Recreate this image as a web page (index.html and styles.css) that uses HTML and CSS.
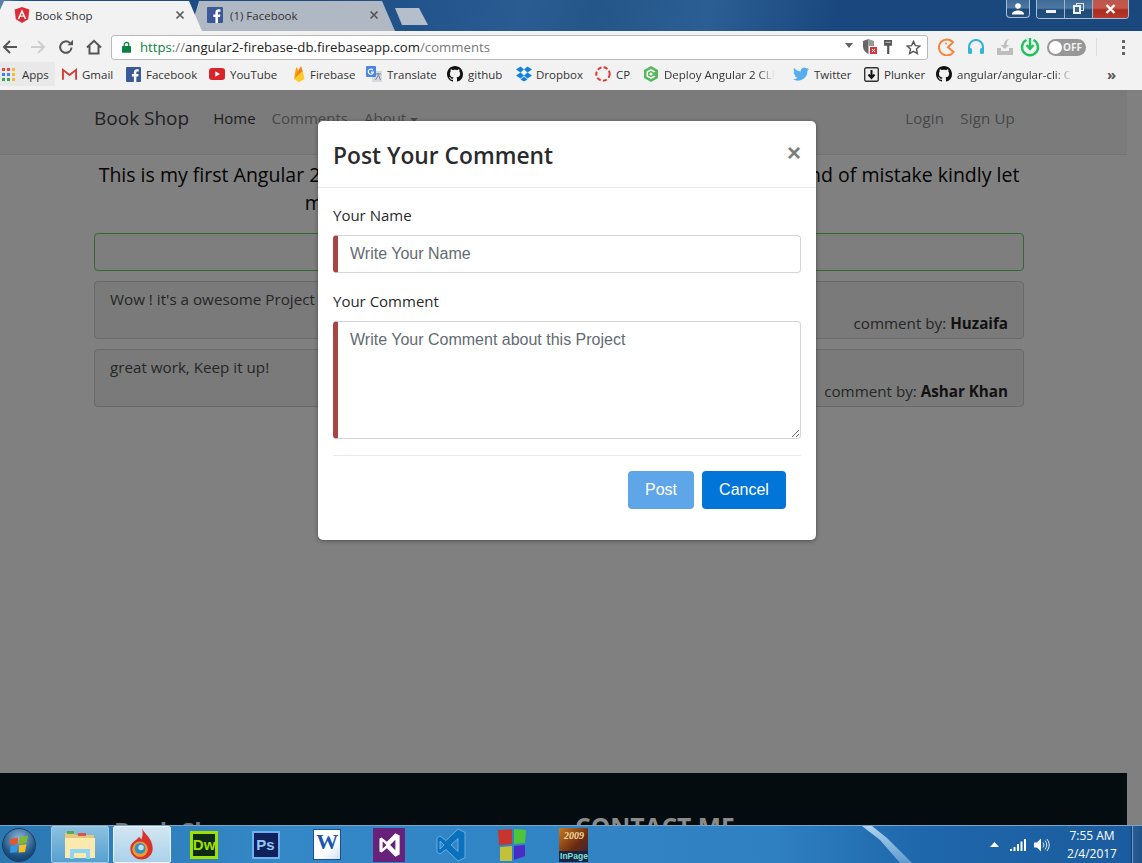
FILE: index.html
```html
<!DOCTYPE html>
<html lang="en">
<head>
<meta charset="utf-8">
<title>Book Shop</title>
<link rel="stylesheet" href="styles.css">
</head>
<body>
<svg class="defs" width="0" height="0" aria-hidden="true">
  <symbol id="gh" viewBox="0 0 16 16"><path d="M8 0C3.58 0 0 3.58 0 8c0 3.54 2.29 6.53 5.47 7.59.4.07.55-.17.55-.38 0-.19-.01-.82-.01-1.49-2.01.37-2.53-.49-2.69-.94-.09-.23-.48-.94-.82-1.13-.28-.15-.68-.52-.01-.53.63-.01 1.08.58 1.23.82.72 1.21 1.87.87 2.33.66.07-.52.28-.87.51-1.07-1.78-.2-3.64-.89-3.64-3.95 0-.87.31-1.59.82-2.15-.08-.2-.36-1.02.08-2.12 0 0 .67-.21 2.2.82.64-.18 1.32-.27 2-.27.68 0 1.36.09 2 .27 1.53-1.04 2.2-.82 2.2-.82.44 1.1.16 1.92.08 2.12.51.56.82 1.27.82 2.15 0 3.07-1.87 3.75-3.65 3.95.29.25.54.73.54 1.48 0 1.07-.01 1.93-.01 2.2 0 .21.15.46.55.38A8.013 8.013 0 0 0 16 8c0-4.42-3.58-8-8-8z"/></symbol>
  <symbol id="fb" viewBox="0 0 16 16"><rect width="16" height="16" rx="1" fill="#3b5998"/><path d="M11 16V10h2l.4-2.6H11V6c0-.8.3-1.2 1.2-1.2h1.3V2.4C13.2 2.3 12.400 2.300 11.600 2.300 9.700 2.300 8.400 3.400 8.400 5.600v1.800H6.300V10h2.100v6z" fill="#fff"/></symbol>
</svg>

<header class="titlebar">
  <div class="tabs">
    <div class="tab tab-active">
      <svg class="ico16" viewBox="0 0 16 16"><path d="M8 0 .7 2.600 1.800 12.300 8 16l6.200-3.700 1.100-9.700z" fill="#dd2c36"/><path d="M8 2.200 3.600 12h1.700l.9-2.200h3.600l.9 2.200h1.700zM8 6l1.300 2.600H6.700z" fill="#fff"/></svg>
      <span class="tab-title">Book Shop</span>
      <svg class="tab-x" viewBox="0 0 10 10"><path d="M1.500 1.500l7 7m0-7l-7 7" stroke="#5a5a5a" stroke-width="1.700"/></svg>
    </div>
    <div class="tab tab-other">
      <svg class="ico16"><use href="#fb"/></svg>
      <span class="tab-title">(1) Facebook</span>
      <svg class="tab-x" viewBox="0 0 10 10"><path d="M1.500 1.500l7 7m0-7l-7 7" stroke="#555" stroke-width="1.700"/></svg>
    </div>
    <div class="tab-new"></div>
  </div>
  <div class="winbtns">
    <div class="winbtn win-user">
      <svg viewBox="0 0 14 12" width="14" height="12"><circle cx="7" cy="3" r="2.800" fill="#fff"/><path d="M1 11.500c0-3 3-4 6-4s6 1 6 4z" fill="#fff"/></svg>
    </div>
    <div class="wingroup">
      <div class="winbtn win-min"><span class="min-bar"></span></div>
      <div class="winbtn win-max"><span class="max-back"></span><span class="max-front"></span></div>
      <div class="winbtn win-close">
        <svg viewBox="0 0 12 10" width="13" height="10"><path d="M2 1l8 8m0-8l-8 8" stroke="#fff" stroke-width="2.400"/></svg>
      </div>
    </div>
  </div>
</header>

<nav class="toolbar">
  <svg class="tool tool-back" viewBox="0 0 16 16"><path d="M15 8H2.500M8 2 2 8l6 6" fill="none" stroke="#555" stroke-width="2"/></svg>
  <svg class="tool tool-fwd" viewBox="0 0 16 16"><path d="M1 8h12.500M8 2l6 6-6 6" fill="none" stroke="#cfcfcf" stroke-width="2"/></svg>
  <svg class="tool tool-reload" viewBox="0 0 16 16"><path d="M13.500 8.500A5.700 5.700 0 1 1 11.800 4" fill="none" stroke="#555" stroke-width="2"/><path d="M9.500 6.300H15V.8z" fill="#555"/></svg>
  <svg class="tool tool-home" viewBox="0 0 16 16"><path d="M1 8.500 8 1.800l7 6.700M3.500 7v7.500h9V7" fill="none" stroke="#555" stroke-width="2"/></svg>
  <div class="omnibox">
    <svg class="lock" viewBox="0 0 10 13"><path d="M2.500 6V3.800a2.500 2.500 0 0 1 5 0V6" fill="none" stroke="#0b8043" stroke-width="1.400"/><rect y="5.500" width="10" height="7.500" rx=".8" fill="#0b8043"/></svg>
    <div class="url"><span class="u-https">https</span><span class="u-dim">://</span><span>angular2-firebase-db.firebaseapp.com</span><span class="u-dim">/comments</span></div>
    <svg class="omni-ico omni-tri" viewBox="0 0 8 5"><path d="M0 0h8L4 5z" fill="#666"/></svg>
    <svg class="omni-ico omni-shield" viewBox="0 0 14 16"><path d="M5.500 0 0 2v5c0 4 2.500 6.500 5.500 8z" fill="#666"/><path d="M5.500 0 11 2v5H5.500z" fill="#999"/><rect x="7" y="8" width="7" height="7" fill="#d9363e"/><path d="M9 10l3 3m0-3l-3 3" stroke="#fff"/></svg>
    <svg class="omni-ico omni-key" viewBox="0 0 9 16"><path d="M0 0h9v6.500H6V16H3.500V6.500H0z" fill="#555"/><rect x="1.500" y="2" width="6" height="1.300" fill="#bbb"/></svg>
    <svg class="omni-ico omni-star" viewBox="0 0 16 16"><path d="M8 1.500l2 4.500 4.800.5-3.600 3.200 1 4.800L8 12.100l-4.200 2.400 1-4.800L1.200 6.500 6 6z" fill="none" stroke="#555" stroke-width="1.500"/></svg>
  </div>
  <div class="exts">
    <svg class="ext ext-pac" viewBox="0 0 18 18"><path d="M15 4.200A8 8 0 1 0 15.500 14L10 9.300z" fill="none" stroke="#f5843a" stroke-width="2"/><circle cx="8" cy="5.500" r="1" fill="#f5843a"/></svg>
    <svg class="ext ext-head" viewBox="0 0 18 18"><path d="M2 12V9a7 7 0 0 1 14 0v3" fill="none" stroke="#31b4d8" stroke-width="2"/><rect x="1" y="10" width="4" height="6" rx="1.500" fill="#31b4d8"/><rect x="13" y="10" width="4" height="6" rx="1.500" fill="#31b4d8"/></svg>
    <svg class="ext ext-dl" viewBox="0 0 18 18"><path d="M1 10v7h16v-7h-4v3H5v-3z" fill="#bdbdbd"/><path d="M9 11 4.500 7H8C8 4 10 1.500 13 1 11 3 10.500 5 10.500 7H13z" fill="#bdbdbd"/></svg>
    <svg class="ext ext-pow" viewBox="0 0 20 20"><path d="M6.500 3A8 8 0 1 0 13.500 3" fill="none" stroke="#21c25e" stroke-width="2.400"/><path d="M10 1v10M6.500 8 10 12l3.500-4" fill="none" stroke="#21c25e" stroke-width="2.400"/></svg>
    <div class="toggle"><span class="knob"></span><span class="toggle-t">OFF</span></div>
    <span class="tool-sep"></span>
    <div class="menu-dots"><i></i><i></i><i></i></div>
  </div>
</nav>

<div class="bookmarks">
  <a class="bm bm-apps">
    <svg class="ico13" viewBox="0 0 13 13"><rect width="3" height="3" fill="#e8453c"/><rect x="5" width="3" height="3" fill="#e8453c"/><rect x="10" width="3" height="3" fill="#f9bb2d"/><rect y="5" width="3" height="3" fill="#3a7fec"/><rect x="5" y="5" width="3" height="3" fill="#4285f4"/><rect x="10" y="5" width="3" height="3" fill="#f9bb2d"/><rect y="10" width="3" height="3" fill="#34a853"/><rect x="5" y="10" width="3" height="3" fill="#34a853"/><rect x="10" y="10" width="3" height="3" fill="#f9bb2d"/></svg>
    <span>Apps</span>
  </a>
  <a class="bm bm-gmail"><svg class="ico15" viewBox="0 0 16 13"><path d="M1 12V1.500L8 7l7-5.500V12" fill="none" stroke="#d33d33" stroke-width="2"/><path d="M3 12V5.500L8 9l5-3.500V12" fill="#eee"/></svg><span>Gmail</span></a>
  <a class="bm bm-fb"><svg class="ico15"><use href="#fb"/></svg><span>Facebook</span></a>
  <a class="bm bm-yt"><svg class="ico16" viewBox="0 0 16 12"><rect width="16" height="12" rx="3" fill="#d9252a"/><path d="M6.300 3.300 11 6 6.300 8.700z" fill="#fff"/></svg><span>YouTube</span></a>
  <a class="bm bm-fire"><svg class="ico16" viewBox="0 0 16 16"><path d="M3 13 5 2c.1-.5.6-.6.9-.2L8 5.600z" fill="#ffa000"/><path d="M3 13 9.500 .8c.2-.4.6-.4.8 0L12 6z" fill="#f57f17"/><path d="M3 13 11 5.500c.3-.3.7-.1.8.3L13.500 13 8.700 15.700a1.500 1.500 0 0 1-1.400 0z" fill="#ffca28"/></svg><span>Firebase</span></a>
  <a class="bm bm-tr"><svg class="ico16" viewBox="0 0 16 16"><rect x="6" y="5" width="10" height="11" fill="#d6d9de"/><path d="M9 8h6M12 7v2m-2.500 5 3-5 2 5" stroke="#7a8594" fill="none"/><rect width="10" height="11" rx="1" fill="#4a86e8"/><path d="M7 4.200A2.600 2.600 0 1 0 7.400 6.200H5" stroke="#fff" stroke-width="1.200" fill="none"/></svg><span>Translate</span></a>
  <a class="bm bm-gh"><svg class="ico16 black"><use href="#gh"/></svg><span>github</span></a>
  <a class="bm bm-db"><svg class="ico16" viewBox="0 0 16 15"><path d="M4.500 0 0 3l4.500 3L8 3zM11.500 0 8 3l3.500 3L16 3zM0 9l4.500 3L8 9 4.500 6zM8 9l3.500 3L16 9l-4.500-3zM4.500 13l3.500 2 3.500-2L8 10z" fill="#1081de"/></svg><span>Dropbox</span></a>
  <a class="bm bm-cp"><svg class="ico16" viewBox="0 0 16 16"><circle cx="8" cy="8" r="6.700" fill="none" stroke="#dd3b30" stroke-width="2" stroke-dasharray="4.200 2.200"/></svg><span>CP</span></a>
  <a class="bm bm-dep"><svg class="ico16" viewBox="0 0 16 16"><path d="M8 0 15 4v8l-7 4-7-4V4z" fill="#55b95c"/><path d="M8 3 12.500 5.500 11 6.500 8 4.800 5 6.500v3L8 11.200l3-1.700 1.500 1L8 13 3.500 10.500v-5z" fill="#fff"/><path d="M8 6.200 10 8 8 9.800 6 8z" fill="#fff"/></svg><span class="fade fade-dep">Deploy Angular 2 CLI App</span></a>
  <a class="bm bm-tw"><svg class="ico16" viewBox="0 0 16 13"><path d="M16 1.500c-.6.300-1.200.4-1.900.5.700-.4 1.200-1 1.400-1.800-.6.400-1.300.6-2.100.8A3.300 3.300 0 0 0 7.800 4C5.100 3.900 2.700 2.600 1.100.6.200 2.100.7 4 2.100 5c-.5 0-1-.2-1.500-.4 0 1.600 1.100 3 2.600 3.300-.5.100-1 .1-1.500 0 .4 1.300 1.600 2.200 3.100 2.300A6.600 6.600 0 0 1 0 11.500 9.300 9.300 0 0 0 14.400 3.300c.6-.5 1.200-1.100 1.600-1.800z" fill="#55acee"/></svg><span>Twitter</span></a>
  <a class="bm bm-pl"><svg class="ico15" viewBox="0 0 15 15"><rect x=".7" y=".7" width="13.600" height="13.600" rx="1.500" fill="#eee" stroke="#333" stroke-width="1.400"/><path d="M7.500 3v7M4.500 7.500l3 3.500 3-3.500" fill="none" stroke="#111" stroke-width="2"/></svg><span>Plunker</span></a>
  <a class="bm bm-ng"><svg class="ico16 black"><use href="#gh"/></svg><span class="fade fade-ng">angular/angular-cli: CLI tool</span></a>
  <span class="bm-more">»</span>
</div>

<main class="page">
  <div class="scrollgutter"></div>
  <div class="site">
    <div class="navbar">
      <div class="wrap nav-inner">
        <span class="brand">Book Shop</span>
        <span class="nav-link nav-on">Home</span>
        <span class="nav-link">Comments</span>
        <span class="nav-link">About <i class="caret"></i></span>
        <span class="nav-right"><span class="nav-link">Login</span><span class="nav-link">Sign Up</span></span>
      </div>
    </div>
    <div class="wrap content">
      <h4 class="intro">This is my first Angular 2 Project with Firebase Database, so if you found any kind of mistake kindly let<br>me know by posting a comment on this page, it will help</h4>
      <div class="alertbox"></div>
      <div class="card">
        <div class="card-text">Wow ! it's a owesome Project</div>
        <div class="card-by">comment by: <b>Huzaifa</b></div>
      </div>
      <div class="card">
        <div class="card-text">great work, Keep it up!</div>
        <div class="card-by">comment by: <b>Ashar Khan</b></div>
      </div>
    </div>
    <footer class="footer">
      <div class="foot-brand">Book Shop</div>
      <div class="foot-contact">CONTACT ME</div>
    </footer>
  </div>

  <section class="modal">
    <div class="modal-head">
      <h2 class="modal-title">Post Your Comment</h2>
      <span class="modal-x">×</span>
    </div>
    <form class="modal-body">
      <label class="lbl" for="n">Your Name</label>
      <input class="field" id="n" type="text" placeholder="Write Your Name">
      <label class="lbl lbl2" for="c">Your Comment</label>
      <textarea class="field area" id="c" placeholder="Write Your Comment about this Project"></textarea>
      <div class="modal-foot">
        <button class="btn btn-post" type="button">Post</button>
        <button class="btn btn-cancel" type="button">Cancel</button>
      </div>
    </form>
  </section>
</main>

<footer class="taskbar">
  <div class="orb">
    <svg viewBox="0 0 20 20" width="20" height="20"><path d="M1 4.500 9 2.500 8.500 9 1.500 10z" fill="#e8552a"/><path d="M10.500 2 19 1 17.500 8 10 9z" fill="#7ebb2d"/><path d="M1.500 11 8.500 10 8 17 1 18z" fill="#2f9be8"/><path d="M10 10.300 17.500 9.300 16 17 9.500 17.500z" fill="#f6c022"/></svg>
  </div>
  <div class="tb-btn tb-folder">
    <svg viewBox="0 0 32 30" width="32" height="30"><path d="M1 3h9l2 2h18v23H1z" fill="#e6c778"/><path d="M1 8h30v20H1z" fill="#fbe9ad"/><rect x="3" y="1" width="7" height="3" fill="#55a85a"/><rect x="14" y="3" width="8" height="3" fill="#d9534f"/><path d="M6 19h20v10h-4v-6H10v6H6z" fill="#8ed6f3"/></svg>
  </div>
  <div class="tb-btn tb-browser">
    <svg viewBox="0 0 28 34" width="28" height="33"><path d="M14 0c1 5 11 10 11 21a11.500 11.500 0 0 1-23 0C2 14 9 13 11 9c1 1 2 2 2 3 2-3 2-8 1-12z" fill="#d8342c"/><circle cx="12" cy="22" r="8" fill="#f09a2e"/><circle cx="12" cy="21" r="5.500" fill="#2f8fc8"/><circle cx="13" cy="20" r="2.800" fill="#bfe3f2"/></svg>
  </div>
  <div class="tb-app"><span class="dw">Dw</span></div>
  <div class="tb-app"><span class="ps">Ps</span></div>
  <div class="tb-app">
    <div class="word"><span>W</span></div>
  </div>
  <div class="tb-app">
    <svg viewBox="0 0 30 32" width="32" height="34"><rect width="30" height="32" fill="#68217a"/><path d="M21 5 25 7v18l-4 2-8-8-5 4-2-1V10l2-1 5 4zM9 12.500v7l3.500-3.500zM21 11l-5 5 5 5z" fill="#fff"/></svg>
  </div>
  <div class="tb-app">
    <svg viewBox="0 0 30 34" width="30" height="34"><path d="M22 1 29 4.500v25L22 33 10 21.500 4 26 1 24V10l3-2 6 4.500zM22 10.500 15 17l7 6.500zM4 13v8l4-4z" fill="#0a71bf" stroke="#7db8e4" stroke-width=".8"/></svg>
  </div>
  <div class="tb-app">
    <svg viewBox="0 0 30 34" width="30" height="34"><path d="M1 2l14-1v15L2 17z" fill="#c8342e"/><path d="M17 1l12 1-1 13-11 1z" fill="#4fc63a"/><path d="M3 19l12-1v15L3 33z" fill="#c2c23a"/><path d="M17 18l11-1v11l-11 4z" fill="#4a2bc8"/></svg>
  </div>
  <div class="tb-app"><div class="inpage"><span class="ip-year">2009</span><span class="ip-name">InPage</span></div></div>
  <div class="tray">
    <svg class="tray-up" viewBox="0 0 9 5" width="9" height="5"><path d="M0 5 4.500 0 9 5z" fill="#fff"/></svg>
    <svg class="tray-sig" viewBox="0 0 16 12" width="16" height="12"><path d="M0 10h2v2H0zM3.500 8h2v4h-2zM7 5h2v7H7zM10.500 2.500h2V12h-2zM14 0h2v12h-2z" fill="#fff"/></svg>
    <svg class="tray-vol" viewBox="0 0 16 14" width="16" height="14"><path d="M0 4.500h3L7 .5v13l-4-4H0z" fill="#fff"/><path d="M9 4.500q2 2.500 0 5M11 2.500q3.500 4.500 0 9M13 1q4.500 6 0 12" fill="none" stroke="#dfe9f3"/></svg>
    <div class="clock"><div>7:55 AM</div><div>2/4/2017</div></div>
    <div class="show-desk"></div>
  </div>
</footer>
</body>
</html>
```
FILE: styles.css
```css
* { box-sizing: border-box; }
html, body { margin: 0; padding: 0; }
body {
  width: 1142px;
  height: 863px;
  overflow: hidden;
  font-family: "Open Sans", "Noto Sans", sans-serif;
  background: #808080;
  display: flex;
  flex-direction: column;
}
.defs { position: absolute; }
.ico13 { width: 13px; height: 13px; flex: none; }
.ico15 { width: 15px; height: 15px; flex: none; }
.ico16 { width: 16px; height: 16px; flex: none; }
.black { fill: #111; }

/* Title bar + tabs */
.titlebar {
  height: 31px;
  flex: none;
  display: flex;
  justify-content: space-between;
  background: linear-gradient(103deg, #5d86ac 0, #1d4d85 2%, #1a4b84 26%, #2a5c92 46%, #245689 52%, #2b5e93 62%, #1a487e 73%, #1a477c 100%);
}
.tabs { display: flex; align-items: flex-end; }
.tab {
  height: 30px;
  display: flex;
  align-items: center;
  font-size: 11.500px;
  color: #333;
  padding-bottom: 2px;
}
.tab-active {
  background: #f2f2f2;
  width: 202px;
  padding-left: 14px;
  padding-right: 17px;
  clip-path: polygon(0 100%, 0 30%, 4px 0, 189px 0, 100% 100%);
  z-index: 1;
  margin-right: -12px;
}
.tab-other {
  background: #b0b8c4;
  width: 205px;
  padding-left: 17px;
  padding-right: 16px;
  clip-path: polygon(0 100%, 9px 0, 192px 0, 100% 100%);
}
.tab-title { margin-left: 5px; flex: 1; white-space: nowrap; }
.tab-other .tab-title { margin-left: 7px; }
.tab-x { width: 10px; height: 10px; flex: none; }
.tab-new {
  width: 33px;
  height: 17px;
  margin: 0 0 6px 0;
  background: #b5bfcb;
  clip-path: polygon(0 0, 24px 0, 100% 100%, 7px 100%);
}
.winbtns { display: flex; gap: 6px; padding-right: 13px; align-items: flex-start; }
.winbtn {
  height: 18px;
  display: flex;
  align-items: center;
  justify-content: center;
  background: linear-gradient(#3d6a97 0, #4f78a2 45%, #1d4a7a 55%, #244f7d 100%);
  position: relative;
}
.win-user { width: 24px; border: 1px solid #a9bdd3; border-top: 0; border-radius: 0 0 4px 4px; }
.wingroup { display: flex; border: 1px solid #a9bdd3; border-top: 0; border-radius: 0 0 4px 4px; overflow: hidden; }
.win-min { width: 28px; border-right: 1px solid #9db4cb; }
.win-max { width: 28px; border-right: 1px solid #9db4cb; }
.win-close { width: 35px; background: linear-gradient(#b8574f 0, #c9574a 45%, #a92b20 55%, #b8392a 100%); }
.min-bar { width: 10px; height: 3px; background: #f2f2f2; margin-top: 5px; }
.max-back { position: absolute; left: 11px; top: 3px; width: 8px; height: 8px; border: 1px solid #dfe6ee; }
.max-front { position: absolute; left: 8px; top: 5px; width: 8px; height: 9px; border: 2px solid #eef2f6; background: #3a6795; }

/* Toolbar */
.toolbar {
  height: 31px;
  flex: none;
  background: #f2f2f2;
  display: flex;
  align-items: center;
  padding: 1px 0 0 2px;
}
.tool { width: 16px; height: 16px; flex: none; }
.tool-fwd { margin-left: 12px; }
.tool-reload { margin-left: 12px; }
.tool-home { margin-left: 12px; }
.omnibox {
  width: 817px;
  height: 25px;
  margin-left: 9px;
  background: #fff;
  border: 1px solid #b9b9b9;
  border-radius: 3px;
  display: flex;
  align-items: center;
  padding-left: 10px;
}
.lock { width: 9px; height: 12px; flex: none; }
.url {
  margin-left: 9px;
  flex: 1;
  font-size: 13.200px;
  color: #222;
  white-space: nowrap;
}
.u-https { color: #0b8043; }
.u-dim { color: #777; }
.omni-ico { flex: none; }
.omni-tri { width: 8px; height: 5px; margin-bottom: 4px; }
.omni-shield { width: 14px; height: 16px; margin-left: 10px; }
.omni-key { width: 8px; height: 14px; margin-left: 7px; }
.omni-star { width: 15px; height: 15px; margin: 0 6px 0 14px; }
.exts { display: flex; align-items: center; }
.ext { flex: none; width: 18px; height: 18px; }
.ext-pac { margin-left: 10px; }
.ext-head { margin-left: 11px; }
.ext-dl { margin-left: 11px; }
.ext-pow { margin-left: 6px; width: 20px; height: 20px; }
.toggle {
  margin-left: 7px;
  width: 39px;
  height: 17px;
  border-radius: 9px;
  background: #979797;
  display: flex;
  align-items: center;
  padding-left: 2px;
  gap: 1px;
}
.knob { width: 13px; height: 13px; border-radius: 50%; background: #fff; flex: none; }
.toggle-t { font-size: 10px; font-weight: 700; color: #f2f2f2; }
.tool-sep { width: 1px; height: 18px; background: #ddd; margin-left: 10px; }
.menu-dots { display: flex; flex-direction: column; gap: 3px; margin-left: 25px; }
.menu-dots i { display: block; width: 3px; height: 3px; background: #666; }

/* Bookmarks */
.bookmarks {
  height: 28px;
  flex: none;
  background: #f2f2f2;
  display: flex;
  align-items: center;
  font-size: 11.500px;
  color: #333;
  padding-bottom: 4px;
}
.bm { display: flex; align-items: center; white-space: nowrap; flex: none; }
.bm span { display: block; }
.bm-apps { width: 55px; height: 24px; padding-left: 2px; gap: 7px; background: #e9e9e9; margin-right: 7px; }
.bm-gmail { width: 64px; gap: 5px; }
.bm-fb { width: 83px; gap: 5px; }
.bm-yt { width: 82px; gap: 5px; }
.bm-fire { width: 75px; gap: 3px; }
.bm-tr { width: 81px; gap: 5px; }
.bm-gh { width: 69px; gap: 5px; }
.bm-db { width: 79px; gap: 4px; }
.bm-cp { width: 48px; gap: 5px; }
.bm-dep { width: 150px; gap: 5px; }
.bm-tw { width: 71px; gap: 5px; }
.bm-pl { width: 72px; gap: 5px; }
.bm-ng { width: 176px; gap: 5px; }
.fade { overflow: hidden; }
.fade-dep { width: 111px; -webkit-mask-image: linear-gradient(90deg, #000 85%, transparent); mask-image: linear-gradient(90deg, #000 85%, transparent); }
.fade-ng { width: 115px; -webkit-mask-image: linear-gradient(90deg, #000 85%, transparent); mask-image: linear-gradient(90deg, #000 85%, transparent); }
.bm-more { font-size: 15px; color: #555; font-weight: 700; margin-left: -5px; }

/* Page */
.page { flex: 1; position: relative; overflow: hidden; min-height: 0; display: flex; background: #808080; }
.site { width: 1127px; height: 735px; display: flex; flex-direction: column; }
.scrollgutter { order: 1; width: 15px; background: #808080; }
.wrap { width: 960px; margin-left: 79px; padding: 0 15px; }
.navbar { height: 65px; flex: none; background: #7b7b7b; border-bottom: 1px solid #737373; }
.nav-inner { display: flex; align-items: center; height: 56px; }
.brand { font-size: 19px; color: #222; margin-right: 24px; }
.nav-link { font-size: 15px; color: #474747; margin-right: 16px; white-space: nowrap; }
.nav-on { color: #1c1c1c; }
.caret { display: inline-block; width: 0; height: 0; border: 4px solid transparent; border-top-color: #474747; border-bottom: 0; vertical-align: middle; }
.nav-right { margin-left: auto; display: flex; letter-spacing: .2px; }
.nav-right .nav-link:last-child { margin-right: 9px; }
.content { flex: 1; min-height: 0; }
.intro {
  margin: 6px 0 0;
  font-size: 19.500px;
  font-weight: 400;
  line-height: 28px;
  text-align: center;
  color: #040404;
  white-space: nowrap;
}
.alertbox { height: 38px; margin-top: 16px; border: 1px solid #2f6b2f; border-radius: 4px; background: #7e7e7e; }
.card { height: 58px; margin-top: 10px; border: 1px solid #6a6a6a; border-radius: 4px; background: #7a7a7a; padding: 5px 15px; font-size: 15.200px; color: #262626; }
.card-text { line-height: 24px; }
.card-by { text-align: right; line-height: 22px; margin-top: 1px; }
.card-by b { color: #111; font-weight: 700; }
.footer { height: 52px; flex: none; background: #040c0f; overflow: hidden; display: flex; color: #8b8b8b; font-weight: 700; }
.foot-brand { font-size: 24px; margin: 41px 0 0 114px; width: 461px; white-space: nowrap; color: #777; }
.foot-contact { font-size: 24.600px; margin-top: 37px; white-space: nowrap; }

/* Modal */
.modal {
  position: absolute;
  left: 318px;
  top: 31px;
  width: 498px;
  height: 419px;
  background: #fff;
  border-radius: 5px;
  box-shadow: 0 1px 4px rgba(0,0,0,.4);
  color: #292b2c;
}
.modal-head { height: 67px; border-bottom: 1px solid #e9e9e9; display: flex; align-items: center; justify-content: space-between; padding: 4px 15px 0; }
.modal-title { margin: 0; font-size: 22.800px; font-weight: 600; line-height: 1; }
.modal-x { font-family: "Liberation Sans", sans-serif; font-size: 24px; font-weight: 700; color: #7e7e7e; margin-top: -7px; }
.modal-body { padding: 16px 15px 0; display: flex; flex-direction: column; }
.lbl { font-size: 15px; line-height: 22px; margin-bottom: 9px; }
.lbl2 { margin-top: 17px; }
.field {
  width: 468px;
  height: 38px;
  padding: 0 12px;
  border: 1px solid #d5d5d5;
  border-left: 5px solid #a94442;
  border-radius: 4px;
  font: 16px "Liberation Sans", sans-serif;
  color: #464a4c;
  background: #fff;
  display: block;
  outline: none;
}
.field::placeholder { color: #636c72; opacity: 1; }
.area { height: 118px; padding-top: 9px; resize: vertical; }
.modal-foot { margin-top: 16px; border-top: 1px solid #e9e9e9; padding: 15px 15px 0 0; display: flex; justify-content: flex-end; gap: 8px; }
.btn { height: 38px; border: 0; border-radius: 4px; font: 16px "Liberation Sans", sans-serif; color: #fff; padding: 0 16px; }
.btn-post { background: #5fa6e8; width: 66px; }
.btn-cancel { background: #0275d8; width: 84px; }

/* Taskbar */
.taskbar {
  height: 38px;
  flex: none;
  display: flex;
  align-items: center;
  border-top: 1px solid #7aa6c9;
  background: linear-gradient(90deg, #2a78b2 0, #3488c6 25%, #3183c4 55%, #2f80c0 68%, #1f68ac 80%, #1a5b9c 100%);
  position: relative;
}
.taskbar::after {
  content: "";
  position: absolute;
  left: 862px;
  top: 0;
  width: 50px;
  height: 37px;
  background: linear-gradient(180deg, rgba(200,228,246,.85), rgba(140,190,230,.6));
  clip-path: polygon(0 0, 10px 0, 25px 12px, 100% 100%, 38px 100%, 18px 14px);
}
.orb {
  width: 34px;
  height: 34px;
  margin: 0 15px 0 2px;
  flex: none;
  border-radius: 50%;
  background: radial-gradient(circle at 50% 30%, #8fb8d8, #1b4f7f 65%, #0b3a63);
  border: 1px solid #1a3e60;
  display: flex;
  align-items: center;
  justify-content: center;
}
.tb-btn {
  width: 58px;
  height: 37px;
  flex: none;
  margin-right: 4px;
  display: flex;
  align-items: center;
  justify-content: center;
  border: 1px solid #a5cbe6;
  border-radius: 2px;
  background: linear-gradient(#8cc0e0, #56a1d0);
}
.tb-browser { background: linear-gradient(#d2e6f2, #a9d1ea); border-color: #e8f2f9; margin-right: 2px; }
.tb-app { width: 61.700px; flex: none; display: flex; align-items: center; justify-content: center; }
.dw {
  width: 28px; height: 28px;
  background: #0c2a16;
  border: 3px solid #9fe000;
  color: #9fe000;
  font: 700 15px/22px "Liberation Sans", sans-serif;
  text-align: center;
}
.ps {
  width: 28px; height: 28px;
  background: #10205c;
  border: 2px solid #6fb0ee;
  color: #8fc8f8;
  font: 700 15px/23px "Liberation Sans", sans-serif;
  text-align: center;
}
.word {
  width: 28px; height: 31px;
  background: linear-gradient(135deg, #fff 60%, #cfdff0);
  border: 1px solid #1a4f9c;
  color: #1c56b0;
  font: 700 22px/24px "Liberation Serif", serif;
  text-align: center;
}
.inpage {
  width: 29px; height: 34px;
  background: linear-gradient(135deg, #c87a20, #6a2a10 55%, #1b2a50);
  display: flex;
  flex-direction: column;
  align-items: center;
  justify-content: space-between;
  overflow: hidden;
  white-space: nowrap;
}
.ip-year { font: italic 700 10px/16px "Liberation Serif", serif; color: #f4d9a0; }
.ip-name { font: 700 8.500px/11px "Liberation Sans", sans-serif; color: #7fe0d8; background: #1a2440; width: 100%; text-align: center; }
.tray { margin-left: auto; display: flex; align-items: center; color: #fff; font-size: 12px; height: 100%; }
.tray-up { margin-right: 11px; }
.tray-sig { margin-right: 8px; }
.tray-vol { margin-right: 12px; }
.clock { text-align: center; line-height: 18px; width: 60px; margin-right: 9px; }
.show-desk { width: 11px; height: 100%; background: linear-gradient(90deg, #6f9cc4 0 1px, #2a5d92 1px, #1e5288); border-left: 1px solid #123e6d; }
```
